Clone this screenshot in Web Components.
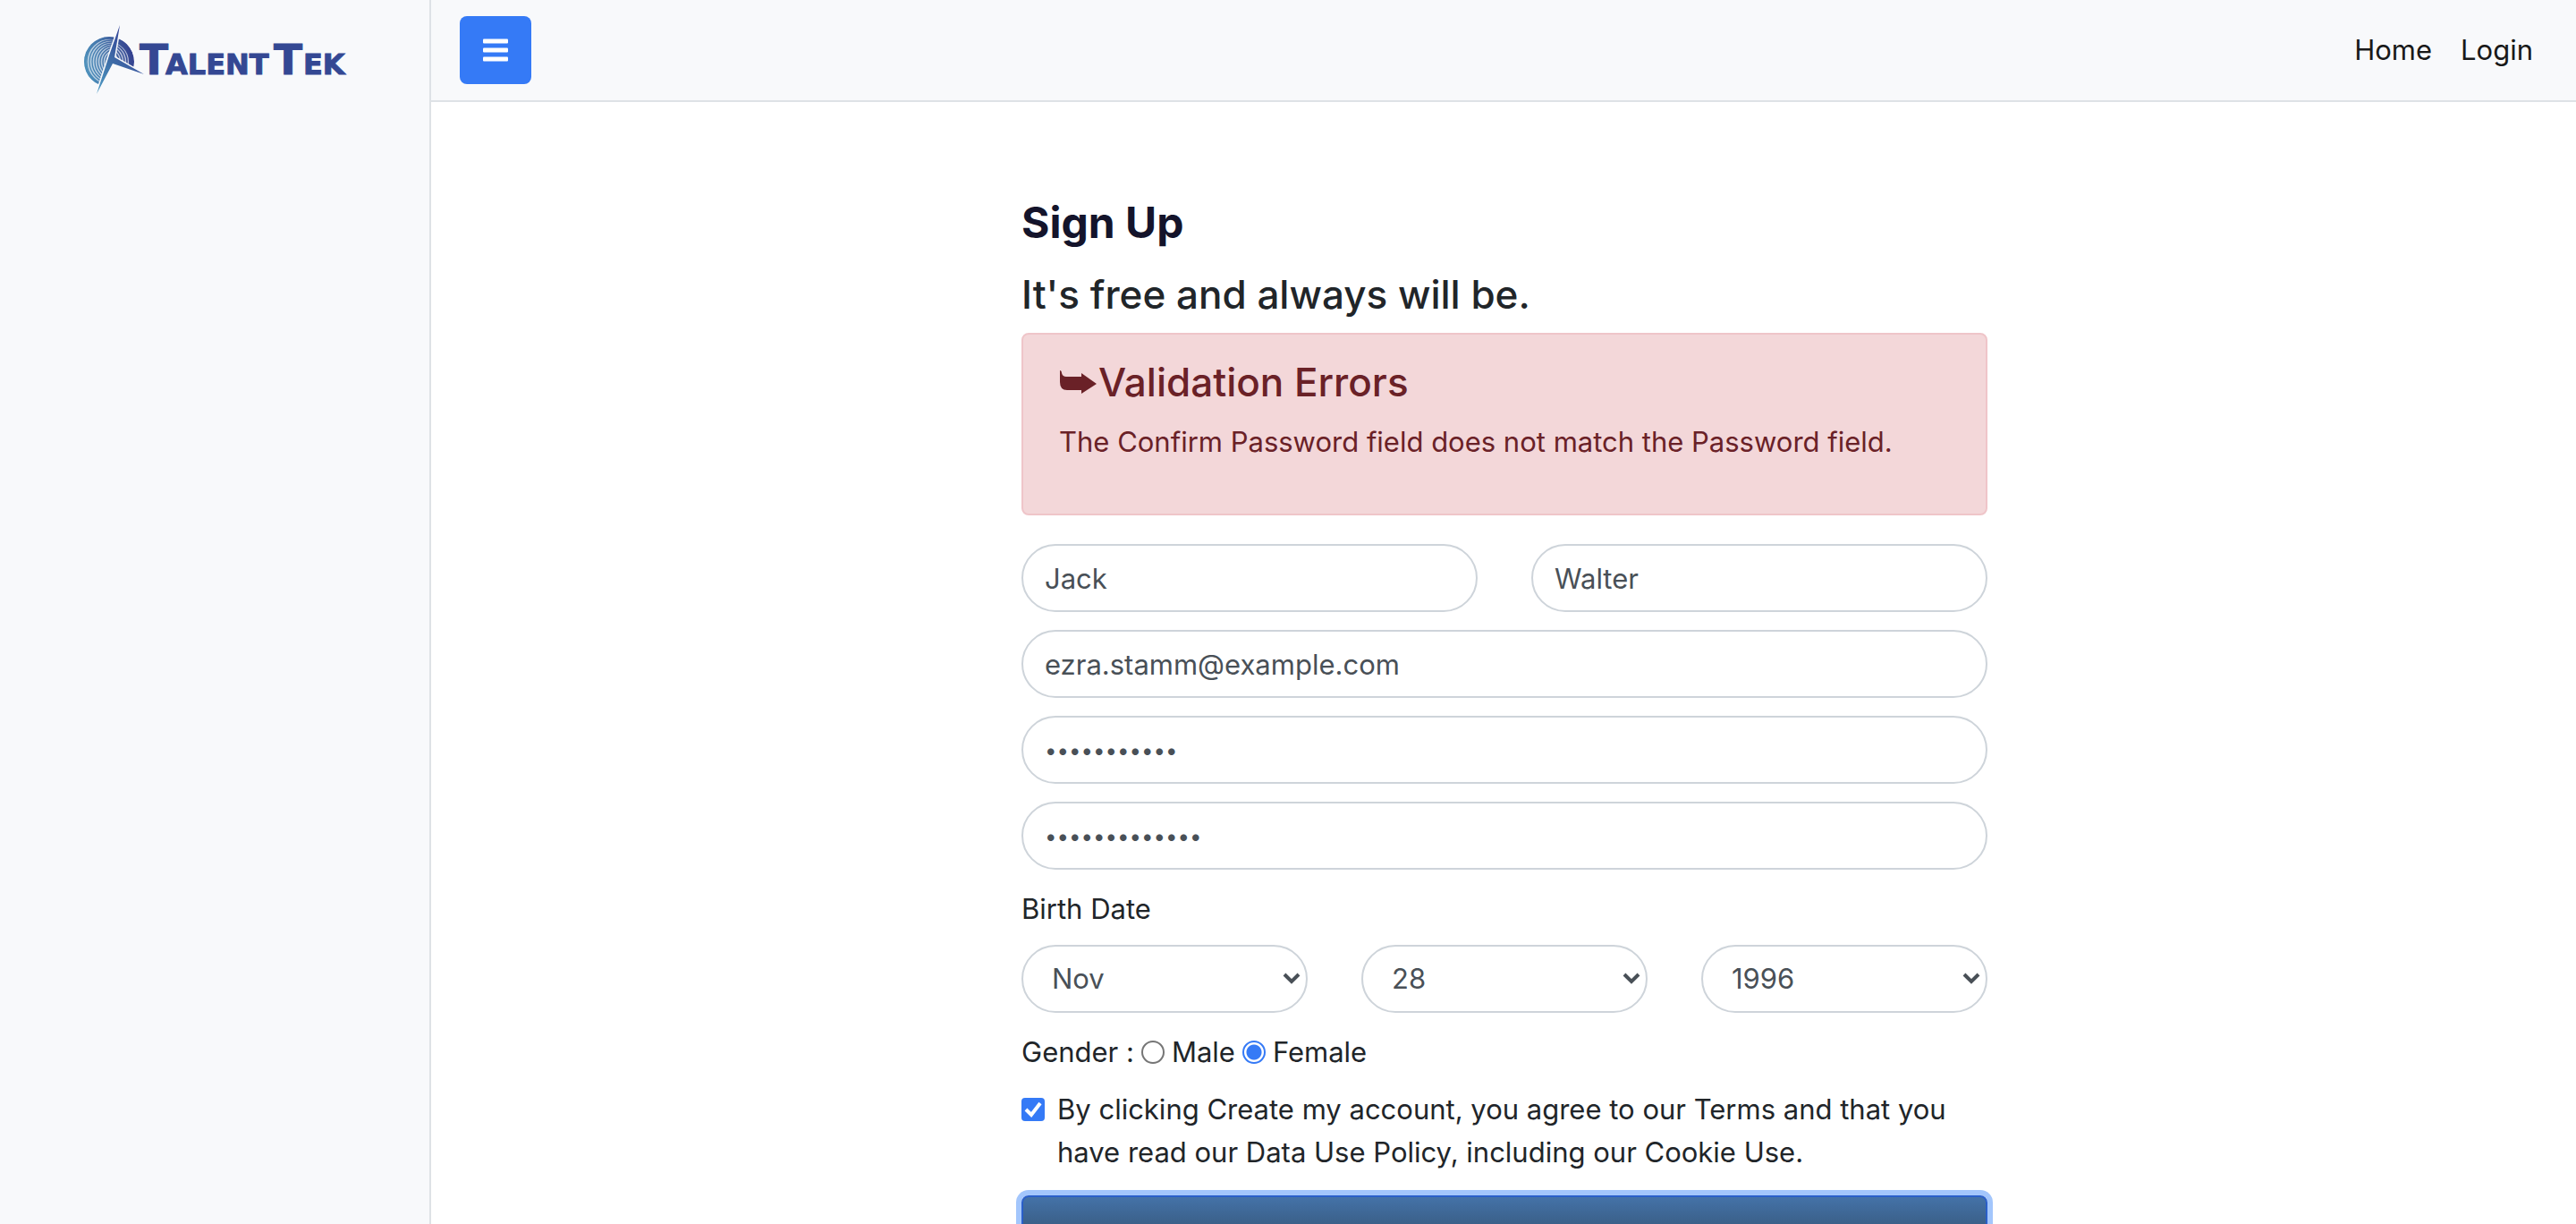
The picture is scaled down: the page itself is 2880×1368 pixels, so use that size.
<!DOCTYPE html>
<html lang="en">
<head>
<meta charset="utf-8">
<title>TalentTek - Sign Up</title>
<style>
  html { scrollbar-width: none; }
  body {
    margin: 0;
    background: #fff;
    color: #212529;
    font: 400 31px/48px Inter, "Liberation Sans", sans-serif;
    --line: #dee2e6;
    --panel: #f8f9fb;
    --field-line: #ced4da;
    --field-text: #495057;
    --primary: #357af6;
  }
</style>
</head>
<body>
<app-shell>
  <brand-logo slot="side"></brand-logo>
  <top-bar slot="top">
    <nav-link href="#home">Home</nav-link>
    <nav-link href="#login">Login</nav-link>
  </top-bar>
  <signup-form></signup-form>
</app-shell>

<script>
const define = (name, html, init) => {
  const template = document.createElement('template');
  template.innerHTML = html;
  customElements.define(name, class extends HTMLElement {
    constructor() {
      super();
      this.attachShadow({ mode: 'open' }).append(template.content.cloneNode(true));
    }
    connectedCallback() { if (init) init(this, this.shadowRoot); }
  });
};

define('app-shell', `
  <style>
    :host { display: flex; min-height: 100vh; }
    aside { flex: 0 0 480px; background: var(--panel); border-right: 2px solid var(--line); }
    .content { flex: 1; min-width: 0; }
    main { padding: 98px 30px 64px 32px; }
  </style>
  <aside><slot name="side"></slot></aside>
  <div class="content">
    <slot name="top"></slot>
    <main><slot></slot></main>
  </div>`);

define('brand-logo', `
  <style>
    :host { display: block; padding: 20px 80px; }
    svg { display: block; width: 320px; height: 95px; }
    text { font-family: "DejaVu Sans", sans-serif; font-weight: 700; fill: #344893; stroke: #344893; stroke-width: 1; }
    .big { font-size: 47px; }
    .small { font-size: 32px; }
  </style>
  <svg viewBox="0 0 320 95" role="img" aria-label="TalentTek">
    <defs>
      <linearGradient id="g" x1="14" y1="60" x2="70" y2="45" gradientUnits="userSpaceOnUse">
        <stop offset="0" stop-color="#4d93bd"/><stop offset=".5" stop-color="#4371a8"/><stop offset="1" stop-color="#34408f"/>
      </linearGradient>
      <linearGradient id="s" x1="30" y1="84" x2="78" y2="40" gradientUnits="userSpaceOnUse">
        <stop offset="0" stop-color="#4e9bc4"/><stop offset=".5" stop-color="#3f6fa8"/><stop offset="1" stop-color="#35479a"/>
      </linearGradient>
      <clipPath id="c"><circle cx="42" cy="49" r="28"/></clipPath>
      <clipPath id="l"><path d="M0 0H53L42 45L28 82L22 95H0Z"/></clipPath>
      <clipPath id="r"><path d="M53 0H95V68L80 61L49 45Z"/></clipPath>
    </defs>
    <g clip-path="url(#c)" fill="none" stroke="url(#g)">
      <g clip-path="url(#l)">
        <circle cx="42" cy="49" r="28" fill="url(#g)" fill-opacity=".35" stroke="none"/>
        <circle cx="42" cy="49" r="27" stroke-width="3"/>
        <g stroke-width="1.4">
          <circle cx="43" cy="49" r="26"/><circle cx="44" cy="49" r="24"/><circle cx="45" cy="49" r="22"/>
          <circle cx="46" cy="49" r="20"/><circle cx="47" cy="49" r="18"/><circle cx="48" cy="49" r="16"/>
          <circle cx="49" cy="49" r="14"/><circle cx="50" cy="49" r="12"/><circle cx="51" cy="49" r="10"/>
        </g>
      </g>
      <g clip-path="url(#r)">
        <circle cx="42" cy="49" r="28" fill="url(#g)" fill-opacity=".35" stroke="none"/>
        <circle cx="42" cy="49" r="25" stroke-width="6"/>
        <g stroke-width="1.5">
          <circle cx="41" cy="49" r="21"/><circle cx="40" cy="49" r="19"/><circle cx="39" cy="49" r="17"/>
          <circle cx="38" cy="49" r="15"/><circle cx="37" cy="49" r="13"/>
        </g>
      </g>
    </g>
    <path d="M54 8L48 44L81 63L46 51L28 85L42 42Z" fill="url(#s)" stroke="#f8f9fb" stroke-width="3" paint-order="stroke"/>
    <text class="big" x="76" y="63">T</text><text class="small" x="105" y="63">ALENT</text>
    <text class="big" x="226" y="63">T</text><text class="small" x="259" y="63">EK</text>
  </svg>`);

define('top-bar', `
  <style>
    :host { display: flex; align-items: center; justify-content: space-between; height: 112px;
      padding: 0 48px 0 32px; background: var(--panel); border-bottom: 2px solid var(--line); }
    button { display: flex; align-items: center; justify-content: center; width: 80px; height: 76px;
      padding: 0; border: 0; border-radius: 8px; background: var(--primary); color: #fff; }
    svg { display: block; width: 28px; height: 28px; }
    nav { display: flex; gap: 32px; }
  </style>
  <button type="button" aria-label="Toggle menu">
    <svg viewBox="0 0 28 28" fill="currentColor" aria-hidden="true">
      <rect y="1.5" width="28" height="5" rx="1"/><rect y="11.5" width="28" height="5" rx="1"/><rect y="21.5" width="28" height="5" rx="1"/>
    </svg>
  </button>
  <nav><slot></slot></nav>`);

define('nav-link', `
  <style>
    :host { display: block; }
    a { color: #191919; text-decoration: none; }
  </style>
  <a><slot></slot></a>`, (host, root) => {
  root.querySelector('a').href = host.getAttribute('href');
});

define('alert-box', `
  <style>
    :host { display: block; padding: 24px 40px 56px; border: 2px solid #efc5c9; border-radius: 8px;
      background: #f3d7d9; color: #6a2127; }
    h2 { display: flex; align-items: center; margin: 0 0 14px; font-size: 44px; line-height: 58px; font-weight: 500; }
    svg { display: block; width: 44px; height: 40px; }
    p { margin: 0; }
  </style>
  <h2>
    <svg viewBox="0 0 44 40" fill="currentColor" aria-hidden="true"><path d="M1 7C2 7 3 8 3 10Q4 14 8 14H25V10L42 22L25 33V29H9Q1 29 1 20Z"/></svg>
    <slot name="title"></slot>
  </h2>
  <p><slot></slot></p>`);

define('text-field', `
  <style>
    :host { display: block; }
    input { display: block; box-sizing: border-box; width: 100%; height: 76px; padding: 12px 24px;
      border: 2px solid var(--field-line); border-radius: 38px; background: #fff; color: var(--field-text);
      font: inherit; outline: 0; }
    input[type=password] { font-size: 24px; }
  </style>
  <input>`, (host, root) => {
  const input = root.querySelector('input');
  input.type = host.getAttribute('type') || 'text';
  input.value = host.getAttribute('value');
  input.setAttribute('aria-label', host.getAttribute('label'));
});

define('select-field', `
  <style>
    :host { display: grid; align-items: center; }
    select, svg { grid-area: 1 / 1; }
    select { appearance: none; box-sizing: border-box; width: 100%; height: 76px; padding: 12px 32px;
      border: 2px solid var(--field-line); border-radius: 38px; background: #fff; color: var(--field-text);
      font: inherit; outline: 0; }
    svg { justify-self: end; width: 20px; height: 14px; margin-right: 8px; pointer-events: none; color: var(--field-text); }
  </style>
  <select></select>
  <svg viewBox="0 0 20 14" aria-hidden="true"><path d="M2 2L10 10L18 2" fill="none" stroke="currentColor" stroke-width="4"/></svg>`,
(host, root) => {
  const select = root.querySelector('select');
  select.setAttribute('aria-label', host.getAttribute('label'));
  select.add(new Option(host.getAttribute('value')));
});

define('signup-form', `
  <style>
    :host { display: block; max-width: 1080px; margin: 0 auto; }
    h1 { margin: 0 0 14px; font-size: 48px; line-height: 74px; font-weight: 700; color: #14142b; }
    .lead { margin: 0 0 14px; font-size: 44px; line-height: 58px; font-weight: 500; }
    form { display: grid; gap: 20px; margin-top: 32px; }
    .row { display: grid; grid-auto-flow: column; grid-auto-columns: 1fr; gap: 60px; }
    .group { display: grid; gap: 16px; }
    .gender { display: flex; align-items: center; gap: 8px; }
    label.opt { display: flex; align-items: center; gap: 8px; }
    input { flex: none; appearance: none; box-sizing: border-box; width: 26px; height: 26px; margin: 0; }
    input[type=radio] { border: 2px solid #767676; border-radius: 50%; background: #fff; }
    input[type=radio]:checked { border-color: var(--primary);
      background: radial-gradient(circle, var(--primary) 0 8px, #fff 9px); }
    .terms { display: flex; gap: 14px; padding-right: 40px; }
    .check { display: grid; flex: none; height: 48px; align-items: center; }
    .check > * { grid-area: 1 / 1; }
    input[type=checkbox] { border-radius: 4px; background: var(--primary); }
    .check svg { width: 26px; height: 26px; pointer-events: none; }
    button { display: block; width: 100%; margin-top: 4px; padding: 48px 24px; border: 2px solid #2a5fc9; border-radius: 8px;
      background: linear-gradient(#4472a8, #3a5f87 32px, #2c4a6b); box-shadow: 0 0 0 6px #a3c6fc;
      color: #fff; font: inherit; }
  </style>
  <h1>Sign Up</h1>
  <h2 class="lead">It's free and always will be.</h2>
  <alert-box><span slot="title">Validation Errors</span>The Confirm Password field does not match the Password field.</alert-box>
  <form>
    <div class="row">
      <text-field label="First name" value="Jack"></text-field>
      <text-field label="Last name" value="Walter"></text-field>
    </div>
    <text-field label="Email" type="email" value="ezra.stamm@example.com"></text-field>
    <text-field label="Password" type="password" value="xxxxxxxxxxx"></text-field>
    <text-field label="Confirm password" type="password" value="xxxxxxxxxxxxx"></text-field>
    <div class="group" role="group" aria-labelledby="birth">
      <div id="birth">Birth Date</div>
      <div class="row">
        <select-field label="Month" value="Nov"></select-field>
        <select-field label="Day" value="28"></select-field>
        <select-field label="Year" value="1996"></select-field>
      </div>
    </div>
    <div class="group">
      <div class="gender" role="radiogroup" aria-labelledby="gender">
        <span id="gender">Gender :</span>
        <label class="opt"><input type="radio" name="gender">Male</label>
        <label class="opt"><input type="radio" name="gender" checked>Female</label>
      </div>
      <div class="terms">
        <span class="check">
          <input type="checkbox" id="terms" checked>
          <svg viewBox="0 0 26 26" aria-hidden="true"><path d="M5 13L11 19L21 6" fill="none" stroke="#fff" stroke-width="4"/></svg>
        </span>
        <label for="terms">By clicking Create my account, you agree to our Terms and that you have read our Data Use Policy, including our Cookie Use.</label>
      </div>
    </div>
    <button type="submit" aria-label="Create my account"></button>
  </form>`);
</script>
</body>
</html>
